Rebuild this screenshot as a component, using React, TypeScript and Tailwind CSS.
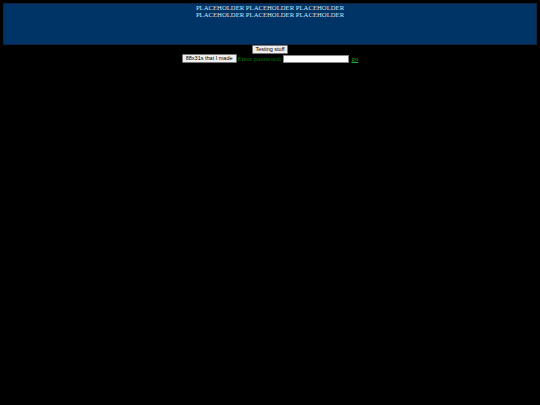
import React from "react"

export default function App() {
  return (
    <div className="min-h-screen bg-black px-[3px] pt-[3px] font-['Liberation_Serif',serif]">
      {/* Header box */}
      <div className="h-[42px] border border-[#0e2442] bg-[#003366] text-center text-[6.7px] leading-[7.3px] text-[#d8e0ec]">
        <div>PLACEHOLDER PLACEHOLDER PLACEHOLDER</div>
        <div>PLACEHOLDER PLACEHOLDER PLACEHOLDER</div>
      </div>

      <div className="flex justify-center">
        <button className="h-[9px] rounded-[1px] border border-[#777] bg-[#efefef] px-[2.5px] font-['Liberation_Sans',sans-serif] text-[5.5px] leading-[7px] text-black">
          Testing stuff
        </button>
      </div>

      <div className="flex items-center justify-center">
        <button className="h-[9px] rounded-[1px] border border-[#777] bg-[#efefef] px-[3px] font-['Liberation_Sans',sans-serif] text-[5.5px] leading-[7px] text-black">
          88x31s that I made
        </button>
        <span className="ml-[1px] text-[6.8px] leading-[8px] text-[#0a7a0a]">Enter password:</span>
        <input
          type="password"
          className="ml-[2px] h-[8px] w-[66px] border border-[#888] bg-white"
        />
        <a href="#" className="ml-[2px] text-[6.8px] leading-[7px] text-[#22aa22] underline">
          go
        </a>
      </div>
    </div>
  )
}
